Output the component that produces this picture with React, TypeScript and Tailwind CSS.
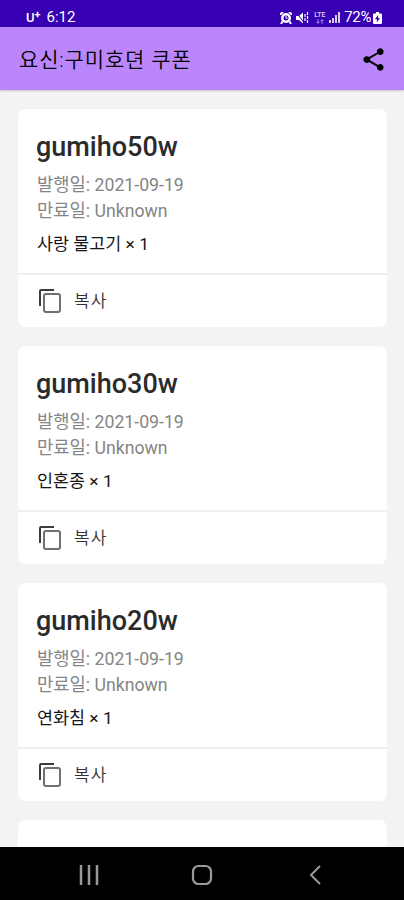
import { MdShare } from "react-icons/md";

interface Coupon {
  code: string;
  issued: string;
  expires: string;
  reward: string;
}

const coupons: Coupon[] = [
  { code: "gumiho50w", issued: "2021-09-19", expires: "Unknown", reward: "사랑 물고기 × 1" },
  { code: "gumiho30w", issued: "2021-09-19", expires: "Unknown", reward: "인혼종 × 1" },
  { code: "gumiho20w", issued: "2021-09-19", expires: "Unknown", reward: "연화침 × 1" },
];

function StatusBar() {
  return (
    <div className="flex h-[27px] shrink-0 items-end justify-between bg-[#3700b3] pr-[22px] pl-[26px] text-white">
      <div className="flex h-[19px] items-center">
        <span className="text-[13px] leading-none font-medium">U</span>
        <span className="mb-1.5 text-[11px] leading-none font-bold">+</span>
        <span className="ml-1.5 text-[15px] leading-none">6:12</span>
      </div>
      <div className="flex h-[19px] items-center">
        <svg className="h-3 w-3" viewBox="0 0 12 12">
          <circle cx="6" cy="6" r="5" fill="white" />
          <path d="M0 2.5 3 0M12 2.5 9 0M2.5 9.5 1 12M9.5 9.5 11 12" stroke="white" strokeWidth="2" />
          <circle cx="6" cy="6" r="2.5" fill="#3700b3" />
          <path d="M6 4v2.2h1.6" stroke="white" fill="none" />
        </svg>
        <svg className="ml-1 h-3 w-[13px]" viewBox="0 0 13 12">
          <path d="M0 4h3l4-3.5v11L3 8H0z" fill="white" />
          <path d="M.5.5l8 11" stroke="#3700b3" strokeWidth="1" />
          <path d="M9 2v8M11.5 0v12" stroke="white" strokeWidth="1.2" strokeDasharray="3 1" />
        </svg>
        <div className="ml-1 flex w-[13px] flex-col items-center">
          <span className="text-[7px] leading-[7px] font-medium opacity-80">LTE</span>
          <svg className="h-[5px] w-2" viewBox="0 0 8 5">
            <path d="M2 0v4M.5 2.8 2 4.4 3.5 2.8M6 5V1M4.5 2.2 6 .6l1.5 1.6" stroke="white" strokeWidth=".7" fill="none" opacity=".75" />
          </svg>
        </div>
        <svg className="ml-[3px] h-[11px] w-[11px]" viewBox="0 0 11 11">
          <path d="M1 11V8M4 11V6M7 11V3M10 11V0" stroke="white" strokeWidth="2" opacity=".8" />
        </svg>
        <span className="ml-1 text-[15px] leading-none tracking-[-0.4px]">72%</span>
        <svg className="ml-0.5 h-3 w-[9px]" viewBox="0 0 9 12">
          <path d="M3 0h3v1.5h2q1 0 1 1V11q0 1-1 1H1q-1 0-1-1V2.5q0-1 1-1h2z" fill="white" />
          <path d="M5 3 2 7.2h2L3.7 10.5 7 6H5z" fill="#3700b3" />
        </svg>
      </div>
    </div>
  );
}

function AppBar() {
  return (
    <header className="z-10 flex h-[63px] shrink-0 items-center justify-between bg-[#bb86fc] pt-0.5 pr-[17px] pl-[19px] text-black shadow-[0_1px_2px_rgba(0,0,0,0.2)]">
      <h1 className="text-[21px] leading-6 font-[350] tracking-[0.85px]">요신:구미호뎐 쿠폰</h1>
      <MdShare className="size-[27px]" />
    </header>
  );
}

function CopyIcon() {
  return (
    <svg className="h-[25px] w-[23px]" viewBox="0 0 23 25" fill="none" strokeWidth="2">
      <path d="M2 18V3q0-1 1-1h13" stroke="#3c3c3c" />
      <rect x="6" y="6" width="16" height="18" rx="2" stroke="#707070" />
    </svg>
  );
}

function CouponCard({ coupon }: { coupon: Coupon }) {
  return (
    <article className="h-[218px] shrink-0 rounded-lg bg-white">
      <div className="h-[164px] px-[19px] pt-[21px]">
        <h2 className="-ml-px text-[27px] leading-[34px] font-medium text-[#2b2b2b]">{coupon.code}</h2>
        <div className="mt-2 text-[17.7px] leading-[26px] text-[#858585]">
          <p>발행일: {coupon.issued}</p>
          <p>만료일: {coupon.expires}</p>
        </div>
        <p className="mt-[7px] text-[17.4px] leading-[26px] text-[#161616]">{coupon.reward}</p>
      </div>
      <button className="flex h-[54px] w-full items-center border-t-2 border-[#efefef] pb-px pl-5 text-[#333]">
        <CopyIcon />
        <span className="ml-[13px] text-[17px] leading-6 font-[350] tracking-[1px]">복사</span>
      </button>
    </article>
  );
}

function NavigationBar() {
  return (
    <nav className="flex h-[53px] shrink-0 items-center bg-black pt-[3px] text-[#999]">
      <svg className="ml-[79px] h-5 w-5" viewBox="0 0 20 20" stroke="currentColor" strokeWidth="2.5">
        <path d="M2 0v20M10 0v20M18 0v20" />
      </svg>
      <svg className="ml-[92px] h-[22px] w-[22px]" viewBox="0 0 22 22" fill="none" stroke="currentColor" strokeWidth="2.2">
        <rect x="2" y="2" width="18" height="18" rx="5.5" />
      </svg>
      <svg className="ml-[96px] h-5 w-3" viewBox="0 0 12 20" fill="none" stroke="currentColor" strokeWidth="2">
        <path d="M11 1 2 10l9 9" />
      </svg>
    </nav>
  );
}

export default function App() {
  return (
    <div className="flex h-[900px] w-[404px] flex-col overflow-hidden bg-[#f3f3f3] font-[Roboto,'Noto_Sans_CJK_KR',sans-serif]">
      <StatusBar />
      <AppBar />
      <main className="flex min-h-0 flex-1 flex-col gap-[19px] overflow-hidden pt-[19px] pr-[17px] pl-[18px]">
        {coupons.map((coupon) => (
          <CouponCard key={coupon.code} coupon={coupon} />
        ))}
        <article className="h-[218px] shrink-0 rounded-lg bg-white" />
      </main>
      <NavigationBar />
    </div>
  );
}
